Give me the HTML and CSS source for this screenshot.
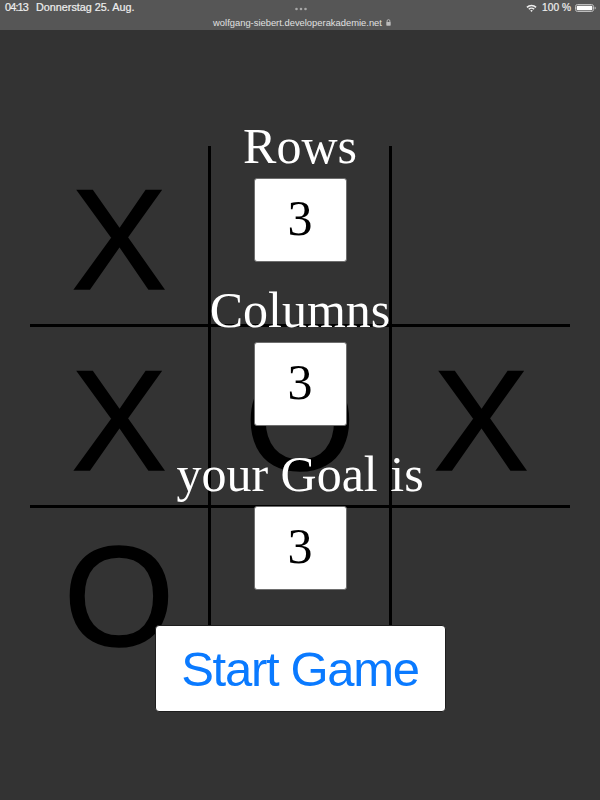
FILE: index.html
```html
<!DOCTYPE html>
<html lang="de">
<head>
<meta charset="utf-8">
<title>Tic Tac Toe</title>
<link rel="stylesheet" href="styles.css">
</head>
<body>
<header class="statusbar">
  <div class="sb-row">
    <div class="sb-left"><span class="time">04:13</span><span class="date">Donnerstag 25. Aug.</span></div>
    <div class="sb-dots">
      <svg width="12" height="4" viewBox="0 0 12 4"><circle cx="1.5" cy="2" r="1.3"/><circle cx="6" cy="2" r="1.3"/><circle cx="10.5" cy="2" r="1.3"/></svg>
    </div>
    <div class="sb-right">
      <svg class="wifi" width="11" height="8" viewBox="0 0 11 8">
        <path d="M0.4 2.8 A7.2 7.2 0 0 1 10.6 2.8 L9.5 3.9 A5.6 5.6 0 0 0 1.5 3.9 Z"/>
        <path d="M2.3 4.7 A4.6 4.6 0 0 1 8.7 4.7 L7.6 5.8 A3 3 0 0 0 3.4 5.8 Z"/>
        <path d="M4.2 6.6 A1.8 1.8 0 0 1 6.8 6.6 L5.5 7.9 Z"/>
      </svg>
      <span class="batt-pct">100 %</span>
      <svg class="battery" width="21" height="8" viewBox="0 0 21 8">
        <rect x="0.5" y="0.5" width="18" height="7" rx="2" fill="none" stroke="#bdbdbd" stroke-width="1"/>
        <rect x="1.7" y="1.7" width="15.6" height="4.6" rx="1" fill="#fff"/>
        <path d="M19.6 2.6 Q20.8 2.8 20.8 4 Q20.8 5.2 19.6 5.4 Z" fill="#bdbdbd"/>
      </svg>
    </div>
  </div>
  <div class="url">wolfgang-siebert.developerakademie.net<svg class="lock" width="5" height="7" viewBox="0 0 5 7"><path d="M1.1 3 V2 A1.4 1.4 0 0 1 3.9 2 V3" fill="none" stroke="#bbb" stroke-width="0.9"/><rect x="0.3" y="3" width="4.4" height="3.7" rx="0.6" fill="#bbb"/></svg></div>
</header>

<main class="stage">
  <div class="board">
    <div class="cell">X</div>
    <div class="cell"></div>
    <div class="cell"></div>
    <div class="cell">X</div>
    <div class="cell">O</div>
    <div class="cell">X</div>
    <div class="cell">O</div>
    <div class="cell"></div>
    <div class="cell"></div>
  </div>

  <form class="setup">
    <label class="label" for="rows">Rows</label>
    <input class="num" id="rows" type="text" value="3">
    <label class="label" for="cols">Columns</label>
    <input class="num" id="cols" type="text" value="3">
    <label class="label" for="goal">your Goal is</label>
    <input class="num num-last" id="goal" type="text" value="3">
    <button class="start" type="button">Start Game</button>
  </form>
</main>
</body>
</html>
```

FILE: styles.css
```css
* { box-sizing: border-box; }

html, body {
  margin: 0;
  padding: 0;
}

body {
  width: 600px;
  height: 800px;
  overflow: hidden;
  background: #333333;
  font-family: "Liberation Sans", Arial, sans-serif;
}

/* ---------- iPad status / url bar ---------- */
.statusbar {
  height: 30px;
  background: #565656;
  color: #eeeeee;
  display: flex;
  flex-direction: column;
}

.sb-row {
  height: 15px;
  display: grid;
  grid-template-columns: 1fr auto 1fr;
  align-items: center;
  padding: 0 4px 0 5px;
}

.sb-left {
  display: flex;
  gap: 8px;
  font-size: 10.8px;
  line-height: 15px;
  -webkit-text-stroke: 0.2px #eeeeee;
}

.time { letter-spacing: -0.8px; }

.sb-dots {
  display: flex;
  margin-top: 3px;
  fill: #a8a8a8;
}

.sb-right {
  justify-self: end;
  display: flex;
  align-items: center;
  gap: 4px;
  font-size: 10.2px;
  line-height: 15px;
  -webkit-text-stroke: 0.2px #eeeeee;
}

.wifi { fill: #eeeeee; margin-right: 1px; }

.url {
  height: 15px;
  display: flex;
  justify-content: center;
  align-items: center;
  gap: 4px;
  font-size: 9.4px;
  color: #e0e0e0;
  padding-left: 4px;
}

/* ---------- stage ---------- */
.stage {
  display: grid;
}

.board,
.setup {
  grid-area: 1 / 1;
}

.board {
  margin: 116px 0 0 30px;
  width: 540px;
  display: grid;
  grid-template-columns: repeat(3, 1fr);
  grid-template-rows: 178px 178px 167px;
  gap: 3px;
  background: #000;
  align-self: start;
}

.cell {
  background: #333333;
  display: flex;
  align-items: center;
  justify-content: center;
  font-family: "Liberation Sans", Arial, sans-serif;
  font-size: 142px;
  line-height: 1;
  color: #000;
  -webkit-text-stroke: 1.6px #000;
  padding-top: 10px;
}

.setup {
  position: relative;
  z-index: 1;
  display: flex;
  flex-direction: column;
  align-items: center;
  padding-top: 88px;
  margin: 0;
}

.label {
  font-family: "Liberation Serif", "Times New Roman", serif;
  font-size: 50px;
  line-height: 56px;
  color: #fff;
  margin-bottom: 4px;
}

.num {
  width: 93px;
  height: 84px;
  margin: 0 0 20px;
  padding: 0 0 5px;
  background: #fff;
  border: 1px solid #6e6e6e;
  border-radius: 3px;
  font-family: "Liberation Serif", "Times New Roman", serif;
  font-size: 50px;
  color: #000;
  text-align: center;
  outline: none;
}

.num-last { margin-bottom: 35px; }

.start {
  width: 291px;
  height: 87px;
  margin: 0;
  padding: 0;
  background: #fff;
  border: 1px solid #1e1e1e;
  border-radius: 4px;
  font-family: "Liberation Sans", Arial, sans-serif;
  font-size: 49px;
  letter-spacing: -1.3px;
  color: #0a7aff;
}
```
